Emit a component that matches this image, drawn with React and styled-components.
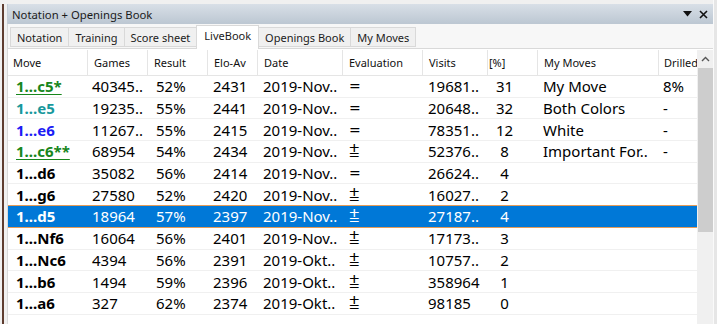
import React from "react";
import styled, { createGlobalStyle } from "styled-components";

const GlobalStyle = createGlobalStyle`
  html, body {
    margin: 0;
    padding: 0;
    background: #f0f0f0;
    font-family: "Noto Sans", "Open Sans", sans-serif;
    overflow: hidden;
  }
`;

const COLS = "80px 60px 60px 50px 85px 80px 65px 50px 121px 40px";

const Frame = styled.div`
  display: flex;
  width: 717px;
  height: 324px;
  overflow: hidden;
  background: #f0f0f0;
`;

const LeftEdge = styled.div`
  width: 7px;
  flex: none;
  display: flex;
  justify-content: flex-start;
  padding-left: 2px;
  box-sizing: border-box;
  padding-top: 4px;
  &::before {
    content: "";
    width: 2px;
    background: #5e3c2f;
  }
`;

const RightEdge = styled.div`
  width: 3px;
  flex: none;
  background: #e6e6e6;
  border-left: 1px solid #fafafa;
`;

const Panel = styled.div`
  flex: 1;
  display: flex;
  flex-direction: column;
  padding-top: 4px;
  min-width: 0;
`;

const TitleBar = styled.div`
  height: 20px;
  display: flex;
  align-items: center;
  justify-content: space-between;
  padding: 0 5px 0 4px;
  background: linear-gradient(#d8dfe7, #bcc7d2);
  border-left: 1px solid #c4ccd5;
  font-size: 11.3px;
  color: #1b1b1b;
`;

const TitleButtons = styled.div`
  display: flex;
  align-items: center;
  gap: 7px;
`;

const TabBar = styled.div`
  height: 25px;
  display: flex;
  align-items: flex-end;
  padding-left: 2px;
  background: #f7f7f7;
  border-bottom: 1px solid #d9d9d9;
  border-left: 1px solid #d9d9d9;
  box-sizing: border-box;
`;

const Tab = styled.div`
  height: ${(p) => (p.$active ? "24px" : "20px")};
  margin-bottom: ${(p) => (p.$active ? "-1px" : "1px")};
  padding: 0 ${(p) => (p.$active ? "7px" : "6px")};
  display: flex;
  align-items: ${(p) => (p.$active ? "flex-start" : "center")};
  padding-top: ${(p) => (p.$active ? "2px" : "0")};
  box-sizing: border-box;
  background: ${(p) => (p.$active ? "#ffffff" : "#f0f0f0")};
  border: 1px solid #d9d9d9;
  border-bottom: ${(p) => (p.$active ? "none" : "1px solid #d9d9d9")};
  margin-right: -1px;
  position: relative;
  z-index: ${(p) => (p.$active ? 1 : 0)};
  font-size: 11px;
  color: #1b1b1b;
  white-space: nowrap;
`;

const Content = styled.div`
  flex: 1;
  display: flex;
  background: #ffffff;
  padding-top: 1px;
  border-left: 1px solid #d9d9d9;
  min-height: 0;
`;

const Table = styled.div`
  flex: 1;
  display: flex;
  flex-direction: column;
  min-width: 0;
`;

const HeaderRow = styled.div`
  display: grid;
  grid-template-columns: ${COLS};
  height: 26px;
  box-sizing: border-box;
  border-bottom: 1px solid #e5e5e5;
`;

const HeadCell = styled.div`
  display: flex;
  align-items: center;
  padding-left: ${(p) => p.$pad}px;
  border-right: ${(p) => (p.$last ? "none" : "1px solid #e5e5e5")};
  font-size: 11px;
  color: #101010;
  white-space: nowrap;
  overflow: ${(p) => (p.$last ? "visible" : "hidden")};
`;

const Row = styled.div`
  display: grid;
  grid-template-columns: ${COLS};
  height: 22.7px;
  box-sizing: border-box;
  border-bottom: 1px solid ${(p) => (p.$selected ? "#e49b58" : "#f0f0f0")};
  border-top: 1px solid ${(p) => (p.$selected ? "#e49b58" : "transparent")};
  margin-top: -1px;
  background: ${(p) => (p.$selected ? "#0078d7" : "transparent")};
  color: ${(p) => (p.$selected ? "#ffffff" : "#000000")};
  flex: none;
`;

const Cell = styled.div`
  display: flex;
  align-items: center;
  justify-content: ${(p) => (p.$center ? "center" : "flex-start")};
  padding-left: ${(p) => p.$pad}px;
  padding-right: ${(p) => p.$padRight || 0}px;
  font-size: 15px;
  white-space: nowrap;
  overflow: hidden;
`;

const MoveText = styled.span`
  font-weight: 700;
  color: ${(p) => p.$color || "inherit"};
  text-decoration: ${(p) => (p.$underline ? "underline" : "none")};
  text-underline-offset: 2px;
  text-decoration-thickness: 1px;
`;

const EvalText = styled.span`
  font-family: "DejaVu Sans", sans-serif;
  font-size: ${(p) => (p.$small ? "18px" : "14px")};
`;

const Scrollbar = styled.div`
  width: 16px;
  flex: none;
  display: flex;
  flex-direction: column;
  background: #f0f0f0;
`;

const ScrollButton = styled.div`
  height: 18px;
  display: flex;
  align-items: center;
  justify-content: center;
`;

const Thumb = styled.div`
  height: 164px;
  margin: 0 0 0 1px;
  background: #cdcdcd;
`;

const columns = [
  { key: "move", title: "Move", head: 5, body: 8 },
  { key: "games", title: "Games", head: 6, body: 4 },
  { key: "result", title: "Result", head: 6, body: 8 },
  { key: "elo", title: "Elo-Av", head: 6, body: 5 },
  { key: "date", title: "Date", head: 6, body: 5 },
  { key: "eval", title: "Evaluation", head: 6, body: 6 },
  { key: "visits", title: "Visits", head: 6, body: 5 },
  { key: "pct", title: "[%]", head: 1, body: 0, center: true, padRight: 17 },
  { key: "mine", title: "My Moves", head: 6, body: 5 },
  { key: "drilled", title: "Drilled", head: 5, body: 4 },
];

const GREEN = "#17861c";

const rows = [
  { move: "1...c5*", color: GREEN, underline: true, games: "40345..", result: "52%", elo: "2431", date: "2019-Nov..", ev: "=", visits: "19681..", pct: "31", mine: "My Move", drilled: "8%" },
  { move: "1...e5", color: "#17989c", games: "19235..", result: "55%", elo: "2441", date: "2019-Nov..", ev: "=", visits: "20648..", pct: "32", mine: "Both Colors", drilled: "-" },
  { move: "1...e6", color: "#1c1cf5", games: "11267..", result: "55%", elo: "2415", date: "2019-Nov..", ev: "=", visits: "78351..", pct: "12", mine: "White", drilled: "-" },
  { move: "1...c6**", color: GREEN, underline: true, games: "68954", result: "54%", elo: "2434", date: "2019-Nov..", ev: "⩲", visits: "52376..", pct: "8", mine: "Important For..", drilled: "-" },
  { move: "1...d6", games: "35082", result: "56%", elo: "2414", date: "2019-Nov..", ev: "=", visits: "26624..", pct: "4" },
  { move: "1...g6", games: "27580", result: "52%", elo: "2420", date: "2019-Nov..", ev: "⩲", visits: "16027..", pct: "2" },
  { move: "1...d5", selected: true, games: "18964", result: "57%", elo: "2397", date: "2019-Nov..", ev: "⩲", visits: "27187..", pct: "4" },
  { move: "1...Nf6", games: "16064", result: "56%", elo: "2401", date: "2019-Nov..", ev: "⩲", visits: "17173..", pct: "3" },
  { move: "1...Nc6", games: "4394", result: "56%", elo: "2391", date: "2019-Okt..", ev: "⩲", visits: "10757..", pct: "2" },
  { move: "1...b6", games: "1494", result: "59%", elo: "2396", date: "2019-Okt..", ev: "⩲", visits: "358964", pct: "1" },
  { move: "1...a6", games: "327", result: "62%", elo: "2374", date: "2019-Okt..", ev: "⩲", visits: "98185", pct: "0" },
];

const tabs = ["Notation", "Training", "Score sheet", "LiveBook", "Openings Book", "My Moves"];

function cellContent(col, r) {
  switch (col.key) {
    case "move":
      return (
        <MoveText $color={r.selected ? null : r.color} $underline={r.underline}>
          {r.move}
        </MoveText>
      );
    case "eval":
      return <EvalText $small={r.ev !== "="}>{r.ev}</EvalText>;
    case "games":
      return r.games;
    case "result":
      return r.result;
    case "elo":
      return r.elo;
    case "date":
      return r.date;
    case "visits":
      return r.visits;
    case "pct":
      return r.pct;
    case "mine":
      return r.mine || "";
    case "drilled":
      return r.drilled || "";
    default:
      return "";
  }
}

export default function App() {
  return (
    <>
      <GlobalStyle />
      <Frame>
        <LeftEdge />
        <Panel>
          <TitleBar>
            <span>Notation + Openings Book</span>
            <TitleButtons>
              <svg width="9" height="6" viewBox="0 0 9 6">
                <path d="M0 0 H9 L4.5 5.5 Z" fill="#111" />
              </svg>
              <svg width="9" height="9" viewBox="0 0 9 9">
                <path d="M1 1 L8 8 M8 1 L1 8" stroke="#111" strokeWidth="1.6" />
              </svg>
            </TitleButtons>
          </TitleBar>
          <TabBar>
            {tabs.map((t) => (
              <Tab key={t} $active={t === "LiveBook"}>
                {t}
              </Tab>
            ))}
          </TabBar>
          <Content>
            <Table>
              <HeaderRow>
                {columns.map((c, i) => (
                  <HeadCell key={c.key} $pad={c.head} $last={i === columns.length - 1}>
                    {c.title}
                  </HeadCell>
                ))}
              </HeaderRow>
              {rows.map((r) => (
                <Row key={r.move} $selected={r.selected}>
                  {columns.map((c) => (
                    <Cell key={c.key} $pad={c.body} $center={c.center} $padRight={c.padRight}>
                      {cellContent(c, r)}
                    </Cell>
                  ))}
                </Row>
              ))}
            </Table>
            <Scrollbar>
              <ScrollButton>
                <svg width="9" height="6" viewBox="0 0 9 6">
                  <path d="M1 5 L4.5 1.5 L8 5" stroke="#555" strokeWidth="1.4" fill="none" />
                </svg>
              </ScrollButton>
              <Thumb />
            </Scrollbar>
          </Content>
        </Panel>
        <RightEdge />
      </Frame>
    </>
  );
}
